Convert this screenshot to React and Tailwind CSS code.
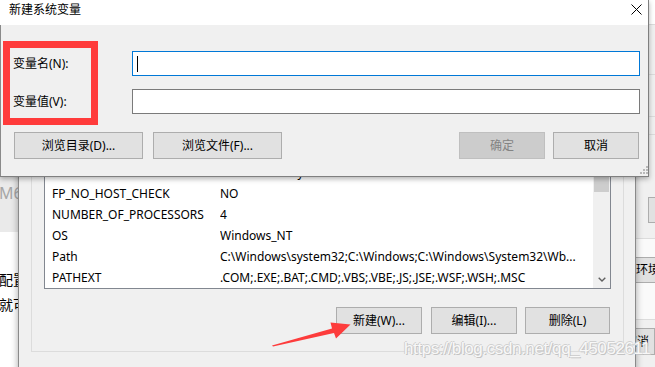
export default function App() {
  const rows = [
    ["DriverData", "C:\\Windows\\System32\\Drivers\\DriverData"],
    ["FP_NO_HOST_CHECK", "NO"],
    ["NUMBER_OF_PROCESSORS", "4"],
    ["OS", "Windows_NT"],
    ["Path", "C:\\Windows\\system32;C:\\Windows;C:\\Windows\\System32\\Wb..."],
    ["PATHEXT", ".COM;.EXE;.BAT;.CMD;.VBS;.VBE;.JS;.JSE;.WSF;.WSH;.MSC"],
  ];

  return (
    <div className="relative w-[655px] h-[367px] overflow-hidden bg-[#f0f0f0] font-['Noto_Sans','Noto_Sans_CJK_SC',sans-serif] text-[12px] text-black">
      {/* far-left background window */}
      <div className="absolute left-0 top-0 w-[24px] h-full flex flex-col overflow-hidden">
        <div className="h-[232px] bg-[#eaeaea] pt-[184px]">
          <div className="ml-[-1px] text-[16px] leading-[18px] text-[#a6a6a6] whitespace-nowrap">M6</div>
        </div>
        <div className="flex-1 bg-white pt-[35px]">
          <div className="ml-[-1px] text-[14px] leading-[25px] whitespace-nowrap">配置</div>
          <div className="ml-[-1px] text-[14px] leading-[25px] whitespace-nowrap">就可</div>
        </div>
      </div>

      {/* right background window */}
      <div className="absolute left-[600px] top-0 w-[55px] h-full flex flex-col bg-[#f0f0f0] overflow-hidden">
        <div className="h-[25px] bg-white border-b border-[#dcdcdc]" />
        <div className="h-[172px] flex flex-col">
          <div className="h-[50px] border-b border-[#dcdcdc]" />
          <div className="h-[42px] border-b border-[#dcdcdc]" />
          <div className="h-[18px] border-b border-[#dcdcdc]" />
        </div>
        <div className="h-[26px] pl-[48px]">
          <div className="w-[30px] h-full bg-[#e1e1e1] border border-[#adadad]" />
        </div>
        <div className="h-[15px]" />
        <div className="h-[82px] bg-[#fafafa] border-y border-[#dcdcdc] pt-[18px]">
          <div className="h-[26px] bg-[#e1e1e1] border-y border-[#adadad] pl-[36px] flex items-center whitespace-nowrap">环境变量(N)...</div>
        </div>
        <div className="h-[8px]" />
        <div className="h-[27px] bg-[#e1e1e1] border border-[#adadad] pl-[24px] flex items-center whitespace-nowrap">取消</div>
      </div>

      {/* environment variables window */}
      <div className="absolute left-[18px] top-[60px] w-[618px] h-[320px] bg-[#f0f0f0] border-x border-[#8a8a8a] shadow-[0_0_7px_rgba(0,0,0,0.35)]">
        <div className="ml-[12px] mt-[40px] w-[593px] border border-[#dcdcdc] px-[12px] pb-[17px]">
          <div className="mt-[9px] h-[179px] bg-white border border-[#828790] flex">
            <div className="flex-1 flex flex-col justify-end overflow-hidden">
              {rows.map(([n, v]) => (
                <div key={n} className="h-[21px] shrink-0 flex items-center whitespace-nowrap">
                  <div className="w-[175px] pl-[7px] shrink-0">{n}</div>
                  <div className="flex-1 overflow-hidden">{v}</div>
                </div>
              ))}
            </div>
            <div className="w-[17px] bg-[#f0f0f0] flex flex-col">
              <div className="h-[17px]" />
              <div className="h-[64px] mx-[1px] bg-[#cdcdcd]" />
              <div className="flex-1" />
              <div className="h-[17px] flex items-center justify-center">
                <svg width="8" height="5" viewBox="0 0 8 5">
                  <path d="M0.7 0.7 L4 4 L7.3 0.7" fill="none" stroke="#606060" strokeWidth="1.4" />
                </svg>
              </div>
            </div>
          </div>
          <div className="mt-[18px] flex justify-end pr-[1px]">
            <div className="w-[86px] h-[27px] bg-[#e1e1e1] border border-[#adadad] flex items-center justify-center">新建(W)...</div>
            <div className="ml-[9px] w-[86px] h-[27px] bg-[#e1e1e1] border border-[#adadad] flex items-center justify-center">编辑(I)...</div>
            <div className="ml-[8px] w-[85px] h-[27px] bg-[#e1e1e1] border border-[#adadad] flex items-center justify-center">删除(L)</div>
          </div>
        </div>
      </div>

      {/* watermark */}
      <div className="absolute left-[404px] top-[340px] text-[17px] leading-none tracking-[-0.4px] font-['Liberation_Sans',sans-serif] text-[#f8f8f8] whitespace-nowrap [text-shadow:1px_1px_0_#c4c4c4,-1px_0_0_#d0d0d0,0_-1px_0_#d0d0d0]">
        https://blog.csdn.net/qq_45052611
      </div>

      {/* red arrow annotation */}
      <svg className="absolute left-0 top-0" width="655" height="367" viewBox="0 0 655 367">
        <polygon points="272,345.5 332,328.5 330.5,322.5 350.5,324.5 336,338.5 334,333 273,346.5" fill="#fd3c3c" />
      </svg>

      {/* new system variable dialog */}
      <div className="absolute left-0 top-0 w-[649px] h-[177px] flex flex-col border-r border-b border-[#7f7f7f] shadow-[0_2px_5px_rgba(0,0,0,0.3)]">
        <div className="h-[25px] bg-white flex justify-between pl-[9px] pr-[6px]">
          <div className="pt-[3px] leading-[14px]">新建系统变量</div>
          <div className="pt-[4px]">
            <svg width="11" height="11" viewBox="0 0 11 11">
              <path d="M0.5 0.5 L10.5 10.5 M10.5 0.5 L0.5 10.5" stroke="#000" strokeWidth="1" fill="none" />
            </svg>
          </div>
        </div>
        <div className="relative flex-1 bg-[#f0f0f0] border-l border-[#8a8a8a] pt-[26px] pl-[12px]">
          <div className="flex items-center h-[25px]">
            <div className="w-[119px]">变量名(N):</div>
            <div className="w-[508px] h-[25px] bg-white border border-[#0078d7] flex items-center pl-[4px]">
              <div className="w-[1px] h-[16px] bg-black" />
            </div>
          </div>
          <div className="mt-[13px] flex items-center h-[25px]">
            <div className="w-[119px]">变量值(V):</div>
            <div className="w-[508px] h-[25px] bg-white border border-[#7a7a7a]" />
          </div>
          <div className="mt-[18px] flex pl-[1px] pr-[9px]">
            <div className="w-[129px] h-[27px] bg-[#e1e1e1] border border-[#adadad] flex items-center justify-center">浏览目录(D)...</div>
            <div className="ml-[10px] w-[129px] h-[27px] bg-[#e1e1e1] border border-[#adadad] flex items-center justify-center">浏览文件(F)...</div>
            <div className="ml-auto w-[86px] h-[27px] bg-[#cccccc] border border-[#bfbfbf] text-[#838383] flex items-center justify-center">确定</div>
            <div className="ml-[8px] w-[86px] h-[27px] bg-[#e1e1e1] border border-[#adadad] flex items-center justify-center">取消</div>
          </div>
          {/* red highlight box */}
          <div className="absolute left-[2px] top-[16px] w-[95px] h-[84px] border-[7px] border-[#ff3b3b]" />
          {/* resize grip */}
          <svg className="absolute right-0 bottom-[2px]" width="8" height="8" viewBox="0 0 8 8">
            <rect x="6" y="0" width="2" height="2" fill="#b8b8b8" />
            <rect x="3" y="3" width="2" height="2" fill="#b8b8b8" />
            <rect x="6" y="3" width="2" height="2" fill="#b8b8b8" />
            <rect x="0" y="6" width="2" height="2" fill="#b8b8b8" />
            <rect x="3" y="6" width="2" height="2" fill="#b8b8b8" />
            <rect x="6" y="6" width="2" height="2" fill="#b8b8b8" />
          </svg>
        </div>
      </div>
    </div>
  );
}
